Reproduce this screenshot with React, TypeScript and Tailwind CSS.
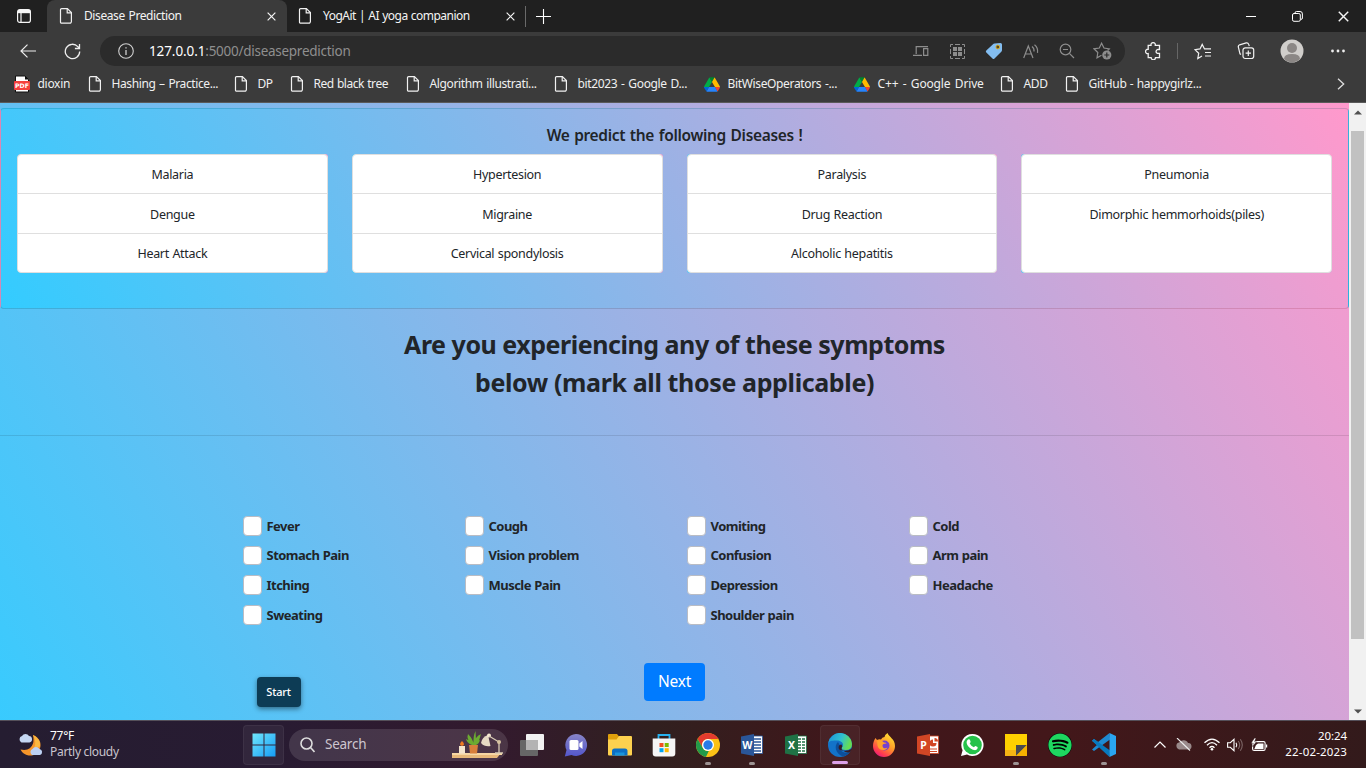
import React from "react";
import { FaSpotify } from "react-icons/fa";

const PageIcon = ({ className = "" }: { className?: string }) => (
  <svg className={`shrink-0 ${className}`} width="14" height="18" viewBox="0 0 14 18" fill="none" stroke="#f1f1f1" strokeWidth="1.2">
    <path d="M2.6 1.6h5.8l4 4v9a1.6 1.6 0 0 1-1.6 1.6H2.6A1.1 1.1 0 0 1 1.5 15V2.7a1.1 1.1 0 0 1 1.1-1.1z" />
    <path d="M8.2 1.8v4.1h4.1" />
  </svg>
);

const PdfIcon = () => (
  <svg className="shrink-0" width="16" height="18" viewBox="0 0 16 18">
    <path d="M1.5 1h9.500l3.500 3.500V17h-13z" fill="#fff" stroke="#111" />
    <path d="M11 1v3.500h3.500z" fill="#111" />
    <rect y="6" width="16" height="9" rx="1" fill="#f5403c" />
    <text x="8" y="12.900" textAnchor="middle" fontSize="6.200" fontWeight="700" fill="#fff" fontFamily="DejaVu Sans, sans-serif">PDF</text>
  </svg>
);

const DriveIcon = () => (
  <svg className="shrink-0" width="16" height="15" viewBox="0 0 87.300 78">
    <path d="M6.600 66.850l3.850 6.650c.8 1.400 1.950 2.500 3.300 3.300L27.500 53H0c0 1.550.4 3.100 1.200 4.500z" fill="#0066da" />
    <path d="M43.650 25L29.900 1.200c-1.350.8-2.500 1.900-3.300 3.300L1.200 48.500A9 9 0 0 0 0 53h27.500z" fill="#00ac47" />
    <path d="M73.550 76.800c1.350-.8 2.500-1.900 3.300-3.300l9.250-16c.8-1.400 1.200-2.950 1.200-4.500H59.800l5.850 11.500z" fill="#ea4335" />
    <path d="M43.650 25L57.400 1.200C56.050.4 54.500 0 52.900 0H34.400c-1.600 0-3.150.45-4.500 1.200z" fill="#00832d" />
    <path d="M59.800 53H27.500L13.750 76.800c1.350.8 2.900 1.200 4.500 1.200h50.800c1.600 0 3.150-.45 4.500-1.200z" fill="#2684fc" />
    <path d="M73.400 26.500l-12.700-22c-.8-1.400-1.950-2.500-3.300-3.300L43.650 25 59.800 53h27.450c0-1.550-.4-3.100-1.200-4.500z" fill="#ffba00" />
  </svg>
);

const Cross = ({ size = 9 }: { size?: number }) => (
  <svg className="shrink-0" width={size} height={size} viewBox="0 0 10 10" stroke="#f5f5f5" strokeWidth="1.300">
    <path d="M.7.7l8.600 8.600M9.300.7L.7 9.300" />
  </svg>
);

function TabStrip() {
  return (
    <div className="flex h-8 shrink-0 bg-[#202020] text-[12px] text-[#f4f4f4]">
      <div className="flex w-[47px] items-center justify-center">
        <svg width="16" height="16" viewBox="0 0 16 16" fill="none" stroke="#f5f5f5" strokeWidth="1.200">
          <rect x="1.600" y="1.600" width="12.800" height="12.800" rx="2.200" />
          <path d="M5 5v9" />
          <path d="M2 3.600h12" strokeWidth="3.200" />
        </svg>
      </div>
      <div className="flex w-60 items-center rounded-t-lg bg-[#3b3b3b] pl-3 pr-[11px]">
        <PageIcon />
        <span className="ml-[11px] flex-1 whitespace-nowrap tracking-[-0.4px] [word-spacing:1px]">Disease Prediction</span>
        <Cross />
      </div>
      <div className="flex w-[239px] items-center border-r border-[#6a6a6a] [border-image:linear-gradient(#202020_20%,#6a6a6a_20%,#6a6a6a_82%,#202020_82%)_1] pl-[11px] pr-[10px]">
        <PageIcon />
        <span className="ml-[11px] flex-1 whitespace-nowrap tracking-[-0.5px] [word-spacing:0.5px]">YogAit | AI yoga companion</span>
        <Cross />
      </div>
      <div className="flex w-[34px] items-center justify-center">
        <svg width="15" height="15" viewBox="0 0 15 15" stroke="#fff" strokeWidth="1.100"><path d="M7.500 0v15M0 7.500h15" /></svg>
      </div>
      <div className="ml-auto flex w-[138px]">
        <div className="flex w-[46px] items-center justify-center"><div className="h-px w-[10px] bg-white" /></div>
        <div className="flex w-[46px] items-center justify-center">
          <svg width="11" height="11" viewBox="0 0 11 11" fill="none" stroke="#fff"><rect x=".5" y="2.500" width="7.800" height="7.800" rx="1.500" /><path d="M3 2.300V2A1.500 1.500 0 0 1 4.500.5H8A2.400 2.400 0 0 1 10.400 3v4A1.400 1.400 0 0 1 9 8.400h-.5" /></svg>
        </div>
        <div className="flex w-[46px] items-center justify-center"><Cross size={11} /></div>
      </div>
    </div>
  );
}

function AddressBar() {
  return (
    <div className="flex h-[38px] shrink-0 items-center">
      <svg className="ml-5" width="16" height="14" viewBox="0 0 16 14" fill="none" stroke="#eee" strokeWidth="1.200"><path d="M16 7H1M7.500.6L1 7l6.500 6.400" /></svg>
      <svg className="ml-7" width="17" height="17" viewBox="0 0 17 17" fill="none" stroke="#eee" strokeWidth="1.300"><path d="M15.700 8.500a7.200 7.200 0 1 1-1.900-4.900l1.600 1.700M15.500 1v4.500h-4.600" /></svg>
      <div className="ml-[19px] flex h-[30px] w-[1025px] items-center rounded-full bg-[#2b2b2b] pl-[18px] pr-[13px]">
        <svg width="16" height="16" viewBox="0 0 16 16" fill="none" stroke="#d0d0d0" strokeWidth="1.100"><circle cx="8" cy="8" r="7.300" /><path d="M8 7v5M8 4.200v1.400" strokeWidth="1.300" /></svg>
        <div className="ml-[15px] flex-1 whitespace-nowrap text-[13.500px] tracking-[-0.1px] text-[#8f8f8f]"><span className="text-white">127.0.0.1</span><span className="tracking-[-0.270px]">:5000/diseaseprediction</span></div>
        <div className="flex items-center text-[#8d8d8d]">
          <svg width="16" height="12" viewBox="0 0 16 12" fill="none" stroke="currentColor" strokeWidth="1.200"><path d="M15 1.600H3.200v7.500M0 10.400h9M10.600 3.600h4.200v6.800h-4.200z" /></svg>
          <svg className="ml-[21px]" width="15" height="15" viewBox="0 0 15 15" fill="none" stroke="currentColor"><path d="M.5 3V.5H3M5 .5h5M12 .5h2.500V3M14.500 5v5M14.500 12v2.500H12M10 14.500H5M3 14.500H.5V12M.5 10V5" /><path fill="currentColor" stroke="none" d="M3 3h4v4H3zM8 3h4v4H8zM3 8h4v4H3zM8 8h4v4H8z" /></svg>
          <svg className="ml-5" width="18" height="18" viewBox="0 0 18 18"><path d="M8 2.200Q8.500 1.500 9.500 1.400L15.500 1q1.500 0 1.500 1.500V8q0 1-.7 1.700L9.500 16.500q-1 1-2 0L1.300 10.500q-1-1 0-2z" fill="#83bdf0" /><circle cx="12.800" cy="5" r="1.900" fill="#5a4a1b" stroke="#e1b22a" strokeWidth=".9" /></svg>
          <svg className="ml-5" width="16" height="15" viewBox="0 0 16 15" fill="none" stroke="currentColor" strokeWidth="1.200"><path d="M.7 14L5.300 2 10 14M2.300 10h6M9 2.500q2.500 2 2 5M11.500.8q3.800 3 3 8" /></svg>
          <svg className="ml-5" width="16" height="16" viewBox="0 0 16 16" fill="none" stroke="currentColor" strokeWidth="1.200"><circle cx="6.500" cy="6.500" r="5.300" /><path d="M10.400 10.400L15 15M4 6.500h5" /></svg>
          <svg className="ml-[18px]" width="19" height="18" viewBox="0 0 19 18" fill="none" stroke="currentColor" strokeWidth="1.200"><path d="M8.500 13.300L4 15.800l.8-5.300L1 6.800l5.300-.8L8.600 1.200 11 6l5.300.8-1.700 1.700" /><circle cx="13.800" cy="13" r="4.600" fill="currentColor" stroke="none" /><path d="M13.800 10.500v5M11.300 13h5" stroke="#2b2b2b" strokeWidth="1.200" /></svg>
        </div>
      </div>
      <svg className="ml-[20px]" width="17" height="18" viewBox="0 0 17 18" fill="none" stroke="#f1f1f1" strokeWidth="1.300"><path d="M3.200 3.300H6a2.200 2.200 0 1 1 4.300 0h4.200v4.200h-1a2 2 0 1 0 0 3.900h1v4.200h-4a2.200 2.200 0 1 1-4.400 0H3.200v-4a2.200 2.200 0 1 1 0-4.300z" /></svg>
      <div className="ml-[15px] h-4 w-px bg-[#666]" />
      <svg className="ml-4" width="18" height="17" viewBox="0 0 18 17" fill="none" stroke="#f1f1f1" strokeWidth="1.200"><path d="M8 13l-4.200 2.500.9-5.200L1 6.700l5-.8 2.200-4.500 2.300 4.500H17M11 9.500h6M11 13h6" /></svg>
      <svg className="ml-[25px]" width="18" height="18" viewBox="0 0 18 18" fill="none" stroke="#f1f1f1" strokeWidth="1.200"><rect x="6" y="5.800" width="10.700" height="10.700" rx="2.200" /><path d="M11.300 8.500v5.400M8.600 11.200H14M4 12.500l-1-.7L1.300 5a2 2 0 0 1 1.300-2.200l6.600-1.900a2 2 0 0 1 2.400 1.200l.7 2" /></svg>
      <svg className="ml-[25px]" width="24" height="24" viewBox="0 0 24 24"><circle cx="12" cy="12" r="11.500" fill="#d0cecb" /><circle cx="12" cy="9" r="5" fill="#8b8785" /><path d="M4 20q0-5 8-5t8 5a11.500 11.500 0 0 1-16 0z" fill="#8b8785" /></svg>
      <svg className="ml-[26px]" width="16" height="4" viewBox="0 0 16 4" fill="#eee"><circle cx="2.500" cy="2" r="1.400" /><circle cx="8" cy="2" r="1.400" /><circle cx="13.500" cy="2" r="1.400" /></svg>
    </div>
  );
}

const bookmarks = [
  { label: "dioxin", box: "w-[74px]", text: "tracking-[-0.3px]", icon: <PdfIcon /> },
  { label: "Hashing – Practice...", box: "w-[146px]", text: "tracking-[-0.4px] [word-spacing:1px]", icon: <PageIcon /> },
  { label: "DP", box: "w-14", text: "tracking-[-0.5px]", icon: <PageIcon /> },
  { label: "Red black tree", box: "w-[116px]", text: "tracking-[-0.45px] [word-spacing:0.5px]", icon: <PageIcon /> },
  { label: "Algorithm illustrati...", box: "w-[148px]", text: "tracking-[-0.38px] [word-spacing:1px]", icon: <PageIcon /> },
  { label: "bit2023 - Google D...", box: "w-[150px]", text: "tracking-[-0.35px] [word-spacing:1px]", icon: <PageIcon /> },
  { label: "BitWiseOperators -...", box: "w-[150px]", text: "tracking-[-0.35px] [word-spacing:1px]", icon: <DriveIcon /> },
  { label: "C++ - Google Drive", box: "w-[146px]", text: "tracking-[-0.15px] [word-spacing:1.4px]", icon: <DriveIcon /> },
  { label: "ADD", box: "w-[65px]", text: "tracking-[-0.3px]", icon: <PageIcon /> },
  { label: "GitHub - happygirlz...", box: "w-[150px]", text: "tracking-[-0.3px] [word-spacing:0.5px]", icon: <PageIcon /> },
];

function Bookmarks() {
  return (
    <div className="flex h-[28px] items-center pl-[14px] text-[12px] text-[#f0f0f0]">
      {bookmarks.map((b) => (
        <div key={b.label} className={`flex shrink-0 items-center ${b.box}`}>
          <div className="flex w-[23.500px] shrink-0">{b.icon}</div>
          <span className={`whitespace-nowrap ${b.text}`}>{b.label}</span>
        </div>
      ))}
      <svg className="ml-auto mr-[21px]" width="8" height="12" viewBox="0 0 8 12" fill="none" stroke="#ddd" strokeWidth="1.300"><path d="M1 .7L6.700 6 1 11.300" /></svg>
    </div>
  );
}

const diseases = [
  ["Malaria", "Dengue", "Heart Attack"],
  ["Hypertesion", "Migraine", "Cervical spondylosis"],
  ["Paralysis", "Drug Reaction", "Alcoholic hepatitis"],
  ["Pneumonia", "Dimorphic hemmorhoids(piles)", ""],
];

const symptoms = [
  ["Fever", "Stomach Pain", "Itching", "Sweating"],
  ["Cough", "Vision problem", "Muscle Pain"],
  ["Vomiting", "Confusion", "Depression", "Shoulder pain"],
  ["Cold", "Arm pain", "Headache"],
];

function Diseases() {
  return (
    <section className="mt-[5px] h-[201px] shrink-0 rounded-[4px] border border-black/[0.125] bg-[linear-gradient(60deg,#33ccff,#ff99cc)] px-4 text-[#212529]">
      <h5 className="flex h-[45px] items-end justify-center pb-[7px] text-[15.5px] font-semibold tracking-[-0.34px] [word-spacing:1px]">We predict the following Diseases !</h5>
      <div className="grid grid-cols-4 gap-6">
        {diseases.map((list, i) => (
          <div key={i} className="h-[119px] rounded-[3px] bg-[linear-gradient(60deg,#33ccff,#ff99cc)]">
            <ul className="flex h-full flex-col rounded-[4px] border border-[#dfdfdf] bg-white text-center text-[12.5px] tracking-[-0.3px] [word-spacing:0.5px]">
              {list.map((d, j) => (
                <li key={j} className={`flex flex-1 items-center justify-center pt-[3px] ${j < 2 ? (i === 3 && j === 1 ? "border-b border-white" : "border-b border-[#dfdfdf]") : ""}`}>{d}</li>
              ))}
            </ul>
          </div>
        ))}
      </div>
    </section>
  );
}

function Page() {
  return (
    <div className="flex h-[617px] shrink-0">
      <main className="flex w-[1349px] flex-col overflow-hidden bg-[linear-gradient(60deg,#33ccff,#ff99cc)] bg-[length:1349px_712px] bg-[position:0_-14px] text-[#212529]">
        <Diseases />
        <h1 className="flex h-[127px] shrink-0 flex-col items-center border-b border-black/10 pt-[16px] text-[25px] font-bold leading-[38px]">
          <span className="tracking-[-0.47px]">Are you experiencing any of these symptoms</span>
          <span className="tracking-[-0.37px]">below (mark all those applicable)</span>
        </h1>
        <div className="mt-[75px] flex pl-[243px]">
          {symptoms.map((col, i) => (
            <div key={i} className="flex w-[222px] flex-col">
              {col.map((s) => (
                <label key={s} className="flex h-[29.700px] items-center">
                  <span className="h-[19.500px] w-[19px] rounded-[4px] border border-[#b9bcc4] bg-white" />
                  <span className="ml-[4.500px] pt-px text-[13px] font-bold tracking-[-0.52px] [word-spacing:0.5px]">{s}</span>
                </label>
              ))}
            </div>
          ))}
        </div>
        <div className="mt-[33px] flex items-start pl-[257px]">
          <button className="mt-[14px] h-[30px] w-11 rounded-[4px] bg-[#0d3c55] pr-px text-[11px] font-medium tracking-[-0.2px] text-white shadow-[0_2px_5px_rgba(0,0,0,0.45)]">Start</button>
          <button className="ml-[343px] h-[38px] w-[61px] rounded-[4px] bg-[#007bff] text-[15.500px] tracking-[-0.2px] text-white">Next</button>
        </div>
      </main>
      <div className="flex w-[17px] flex-col items-center bg-[#f1f1f1]">
        <svg className="mt-[6px] mb-[14px] shrink-0" width="8" height="8" viewBox="0 0 8 8" fill="#505050"><path d="M0 5.500L4 1.500l4 4z" /></svg>
        <div className="h-[508px] w-[13px] bg-[#c1c1c1]" />
        <svg className="mt-auto mb-[5px] shrink-0" width="8" height="8" viewBox="0 0 8 8" fill="#505050"><path d="M0 2.500L4 6.500l4-4z" /></svg>
      </div>
    </div>
  );
}

const WeatherIcon = () => (
  <svg width="25" height="24" viewBox="0 0 25 24">
    <path d="M15 2a10.500 10.500 0 1 1-12.500 14.500q10 2 12.500-6 1-4 0-8.500z" fill="#f5952a" />
    <path d="M15 2q8 4 7 11.500l-6 2q3-6-1-13.500z" fill="#fbb83f" />
    <path d="M3.500 9.500a3.500 3.500 0 0 1 .5-6.500 4 4 0 0 1 7 0 3.300 3.300 0 0 1 .5 6.500z" fill="#c5d7f3" />
    <path d="M14 22a3.400 3.400 0 0 1 .5-6 4 4 0 0 1 7 0 3.100 3.100 0 0 1 .5 6z" fill="#bdd1f3" />
  </svg>
);

const LampArt = () => (
  <svg width="52" height="28" viewBox="0 0 52 28">
    <path d="M0 22h49l-4 5H0z" fill="#e7b97a" /><path d="M0 22h50v2H0z" fill="#f6d7a4" />
    <rect x="7" y="15" width="6" height="7.500" fill="#f4e5cd" /><path d="M10 10q4 4 0 5-4-1 0-5z" fill="#f07b22" />
    <path d="M17 14h9l-1 8.500h-7z" fill="#d77f3b" />
    <path d="M21.500 14Q21 5 23.500 0q1 7-.5 14zM20 14Q14 8 16 3q5 5 6 11zM22 14q1-9 7-11-1 6-5 11zM20 14q-5-2-6-6 6 2 7 6zM23 14q1-4 5-5-1 4-4 5z" fill="#6cab31" />
    <path d="M29 12q1-6 7-8l2.500 11q-6 1-9.500-3z" fill="#e6dac4" /><circle cx="37" cy="4.500" r="2" fill="#f6ead2" />
    <path d="M37 5l10 6v11M43 22h8" fill="none" stroke="#d9cbb4" strokeWidth="1.300" /><circle cx="47" cy="11" r="2" fill="#d7c3a1" />
  </svg>
);

const OfficeIcon = ({ letter, color, children }: { letter: string; color: string; children: React.ReactNode }) => (
  <svg width="24" height="24" viewBox="0 0 24 24">
    <path d="M12 3h10.500v17.500H12z" fill="#fff" stroke={color} strokeWidth=".8" />
    {children}
    <path d="M1 3.500L14 1v22L1 20.500z" fill={color} />
    <text x="7.400" y="15.800" textAnchor="middle" fontSize="10.500" fontWeight="700" fill="#fff" fontFamily="Noto Sans, sans-serif">{letter}</text>
  </svg>
);

const apps: { name: string; dot?: boolean; active?: boolean; icon: React.ReactNode }[] = [
  { name: "tasks", icon: <svg width="24" height="24" viewBox="0 0 24 24"><rect x="6" y="1" width="18" height="16" rx="1" fill="#f2f2f2" /><rect x="0" y="7" width="18" height="16" rx="1" fill="#666" /><path d="M6 7h12v10H6z" fill="#b3b3b3" /></svg> },
  { name: "chat", icon: <svg width="24" height="24" viewBox="0 0 24 24"><defs><linearGradient id="chat" x2="0" y2="1"><stop stopColor="#8784c6" /><stop offset="1" stopColor="#5356cb" /></linearGradient></defs><path d="M12 1a11 11 0 1 1-4.500 21L.8 23.500 2.500 17A11 11 0 0 1 12 1z" fill="url(#chat)" /><rect x="5.500" y="7" width="9" height="10" rx="1.500" fill="#fff" /><path d="M15.300 10.500L18.500 8v8l-3.200-2.500z" fill="#fff" /></svg> },
  { name: "files", icon: <svg width="24" height="24" viewBox="0 0 24 24"><path d="M0 2q0-1 1-1h8l2.500 3H23v5H0z" fill="#e0a00c" /><path d="M0 6.500h8.500L11 3h12q1 0 1 1v17.500q0 1-1 1H1q-1 0-1-1z" fill="#fdd14f" /><path d="M4 22.500V18q0-2.500 2.500-2.500h10.500q2.500 0 2.500 2.500v4.500z" fill="#0c6fc4" /><path d="M7 19.500h9.500v3H7z" fill="#1995dc" /></svg> },
  { name: "store", icon: <svg width="24" height="24" viewBox="0 0 24 24"><path d="M6.500 6.500V2h11v4.500" fill="none" stroke="#28b2ef" strokeWidth="1.800" /><path d="M.7 5.500h22.600v15q0 3-3 3H3.700q-3 0-3-3z" fill="#f5f5f5" /><path d="M7.500 10h4v4h-4z" fill="#f25022" /><path d="M12.700 10h4v4h-4z" fill="#7fba00" /><path d="M7.500 15.200h4v4h-4z" fill="#00a4ef" /><path d="M12.700 15.200h4v4h-4z" fill="#ffb900" /></svg> },
  { name: "chrome", dot: true, icon: <svg width="24" height="24" viewBox="0 0 24 24"><circle cx="12" cy="12" r="12" fill="#fbc116" /><path d="M12 0a12 12 0 0 1 10.400 6H12a6 6 0 0 0-5.200 9L1.600 6A12 12 0 0 1 12 0z" fill="#e33b2e" /><path d="M1.600 6l5.200 9a6 6 0 0 0 6.200 3l-2.600 5.900A12 12 0 0 1 1.600 6z" fill="#229a4a" /><path d="M17.200 15L12 24a12 12 0 0 1-2-.2L13.500 17z" fill="#fbc116" /><circle cx="12" cy="12" r="6" fill="#fff" /><circle cx="12" cy="12" r="4.700" fill="#287be8" /></svg> },
  { name: "word", dot: true, icon: <OfficeIcon letter="W" color="#2a5699"><path d="M14 6h7M14 9h7M14 12h7M14 15h7M14 18h7" stroke="#2a5699" strokeWidth="1.300" /></OfficeIcon> },
  { name: "excel", icon: <OfficeIcon letter="X" color="#1f7245"><path d="M14 6h7M14 9h7M14 12h7M14 15h7M14 18h7" stroke="#1f7245" strokeWidth="1.600" /><path d="M17.500 4v16" stroke="#fff" strokeWidth="1" /></OfficeIcon> },
  { name: "edge", dot: true, active: true, icon: <svg width="24" height="24" viewBox="0 0 24 24"><defs><linearGradient id="e1" x2="1" y2=".3"><stop stopColor="#1a91d6" /><stop offset=".6" stopColor="#30c0cf" /><stop offset="1" stopColor="#65dc55" /></linearGradient></defs><circle cx="12" cy="12" r="12" fill="#1373c9" /><path d="M.2 10A12 12 0 0 1 24 11q0 6-6.500 6c-3 0-4.500-1-3.500-2.500 3-4-1-7-5-7-4 0-7 0-8.800 2.500z" fill="url(#e1)" /><path d="M10 9c-4 3-3 12 5 14.500q5-1 7.500-5c-4 2.500-9 1-10.500-2-1.500-3 0-4 0-4z" fill="#0c4f9c" /><path d="M13.500 11.500q1.700 1.500.1 3.500-.5 1.800 1.500 2.500-4.500.3-4.500-3.200.3-2.800 2.900-2.800zM15 17.500q4.500 1 9-2-1 3-2.500 3.800-3.500 1-6.500-1.800z" fill="#351c25" /></svg> },
  { name: "firefox", icon: <svg width="24" height="24" viewBox="0 0 24 24"><defs><linearGradient id="ff" x1=".8" x2=".2" y2="1"><stop stopColor="#ffe634" /><stop offset=".45" stopColor="#ff9a29" /><stop offset=".8" stopColor="#ff3b50" /><stop offset="1" stopColor="#e31587" /></linearGradient></defs><path d="M15.500 0c1.500 4 7.500 6 7.500 13A11 11 0 0 1 1 13c0-3 1-6 2.500-8L5 7q2-1 4-.5Q10 4 12.500 4q0-2 3-4z" fill="url(#ff)" /><circle cx="12.500" cy="12.500" r="5" fill="#7541cf" /><path d="M5 7.500l4-.5 3 2.500q2.500 0 2.500 1-4 0-4 2c0 3 3 3.500 5 2-2 4-9 3.500-10-2z" fill="#ffa12b" /></svg> },
  { name: "powerpoint", icon: <OfficeIcon letter="P" color="#d24625"><path d="M14 16h7M14 18.500h7" stroke="#d24625" /><path d="M17 6.500a3.500 3.500 0 1 0 3.500 3.500H17zM18.500 5v3.500H22A3.500 3.500 0 0 0 18.500 5z" fill="#d24625" /></OfficeIcon> },
  { name: "whatsapp", icon: <svg width="24" height="24" viewBox="0 0 24 24"><path d="M12.500 1a11 11 0 1 1-5.500 20.500L1 23l1.600-5.800A11 11 0 0 1 12.500 1z" fill="#fff" /><circle cx="12.500" cy="12" r="9.300" fill="#25c24a" /><path d="M9 6.300c.8 0 1 .7 1.600 2.400.1.700-.7 1.200-.9 1.600 1 2 2.300 3.100 4.200 3.900.6-.4 1-1.400 1.500-1.200 1.700.8 2.400 1 2.300 1.600-.2 2-1.800 2.700-3.400 2.500-3.700-.7-7.400-4.200-7.700-7.600 0-1.700 1.100-3.100 2.400-3.200z" fill="#fff" /></svg> },
  { name: "notes", dot: true, icon: <svg width="24" height="24" viewBox="0 0 24 24"><path d="M1 1h22v12l-10 10H1z" fill="#ffd100" /><path d="M1 17h12v6H1z" fill="#f5b414" /><path d="M12 12h11L12 23z" fill="#494a4f" /><path d="M23 12v11H12z" fill="#f5b000" /></svg> },
  { name: "spotify", icon: <span className="flex rounded-full bg-black"><FaSpotify size={24} color="#1ed760" /></span> },
  { name: "vscode", dot: true, icon: <svg width="24" height="24" viewBox="0 0 24 24"><path d="M0 7.700l2-1.600 4 3L17.500 0 18 6.500 2 17.900 0 16.400l5-4.400z" fill="#1e8ad2" /><path d="M2 6.100L18 17.400 17.500 24 0 7.700z" fill="#0879be" /><path d="M17.500 0L24 3v18l-6.500 3z" fill="#2aa6f2" /></svg> },
];

function Taskbar() {
  return (
    <footer className="flex h-12 shrink-0 items-center border-t border-[#55505a] bg-[linear-gradient(90deg,#251d31_0%,#281b32_20%,#331a2e_36%,#31201f_48%,#3f171b_61%,#43171a_77%,#331a1b_100%)] text-[12px] text-white">
      <div className="ml-[18px] flex w-[225px] items-center gap-[7px]">
        <WeatherIcon />
        <div className="flex flex-col pb-px leading-4">
          <span className="tracking-[-0.3px]">77°F</span>
          <span className="whitespace-nowrap tracking-[-0.3px] text-[#c9c4ce]">Partly cloudy</span>
        </div>
      </div>
      <div className="flex h-10 w-[41px] shrink-0 items-center justify-center rounded border border-white/5 bg-white/[0.05]">
        <svg width="24" height="24" viewBox="0 0 24 24"><defs><linearGradient id="win" x2="1" y2="1"><stop stopColor="#70e7fc" /><stop offset="1" stopColor="#159cf5" /></linearGradient></defs><path d="M.5.5h11v11H.5zM12.500.5h11v11h-11zM.5 12.500h11v11H.5zM12.500 12.500h11v11h-11z" fill="url(#win)" /></svg>
      </div>
      <div className="ml-[5px] flex h-8 w-[219px] shrink-0 items-center rounded-full bg-white/[0.12] pl-[11px] pr-1">
        <svg width="15" height="16" viewBox="0 0 15 16" fill="none" stroke="#ddd" strokeWidth="1.600"><circle cx="6.500" cy="6.500" r="5.500" /><path d="M10.500 10.500l4 4.500" /></svg>
        <span className="ml-[10px] flex-1 text-[13.500px] tracking-[-0.25px] text-[#cdc6cf]">Search</span>
        <LampArt />
      </div>
      <div className="ml-[2px] flex shrink-0">
        {apps.map((a) => (
          <div key={a.name} className="flex h-10 w-11 justify-center">
            <div className={`relative flex h-10 w-10 items-center justify-center rounded ${a.active ? "border border-white/5 bg-white/[0.05]" : ""}`}>
              {a.icon}
              {a.dot && <span className={`absolute bottom-0 h-[3px] rounded-full ${a.active ? "w-4 bg-[#dca0e8]" : "w-[6px] bg-[#9d9393]"}`} />}
            </div>
          </div>
        ))}
      </div>
      <svg className="ml-[28px] shrink-0" width="12" height="7" viewBox="0 0 12 7" fill="none" stroke="#fff" strokeWidth="1.200"><path d="M.5 6.500L6 1l5.500 5.500" /></svg>
      <svg className="ml-[9px] shrink-0" width="17" height="13" viewBox="0 0 17 13"><path d="M4 11.500a3.700 3.700 0 0 1 .5-7.200A5 5 0 0 1 13 5a3.200 3.200 0 0 1 .5 6.500z" fill="#99898a" /><path d="M2 0l13 12.500" stroke="#eee" strokeWidth="1.100" /></svg>
      <svg className="ml-[12px] shrink-0" width="16" height="13" viewBox="0 0 16 13" fill="none" stroke="#fff" strokeWidth="1.300"><path d="M.5 4.800q7.500-7.500 15 0M3 7.200q5-5 10 0M5.500 9.700q2.500-2.500 5 0" /><circle cx="8" cy="11.300" r="1.300" fill="#fff" stroke="none" /></svg>
      <svg className="ml-[7px] shrink-0" width="16" height="14" viewBox="0 0 16 14" fill="none" stroke="#fff" strokeWidth="1.100"><path d="M.6 4.700h2.700L7 1.300v11.400L3.300 9.300H.6z" /><path d="M9 4.800q1.600 2.200 0 4.400" /><path d="M11.200 3q3 4 0 8M13.300 1.300q4 5.700 0 11.400" stroke="#7c6566" /></svg>
      <svg className="ml-[8px] shrink-0" width="17" height="14" viewBox="0 0 17 14"><rect x="1.600" y="3.600" width="12.500" height="8.800" rx="1.500" fill="none" stroke="#fff" strokeWidth="1.100" /><path d="M5 7l2-1.500h5.500V11H3.300z" fill="#fff" /><path d="M15 6.500h1.200v3H15z" fill="#fff" /><path d="M3.500 0L0 5.200h2.200L1.500 8.500 5.500 3.800H3.600L5 0z" fill="#fff" stroke="#371b1d" strokeWidth=".5" /></svg>
      <div className="ml-auto mr-[19px] flex flex-col items-end whitespace-nowrap pb-px text-[11.500px] leading-4">
        <span className="tracking-[-0.1px]">20:24</span>
        <span className="tracking-[0.160px]">22-02-2023</span>
      </div>
    </footer>
  );
}

export default function App() {
  return (
    <div className="flex h-screen w-[1366px] flex-col overflow-hidden font-['Noto_Sans','Open_Sans',sans-serif]">
      <TabStrip />
      <div className="flex h-[71px] shrink-0 flex-col border-b border-[#5a5a5a] bg-[#3b3b3b]">
        <AddressBar />
        <Bookmarks />
      </div>
      <Page />
      <Taskbar />
    </div>
  );
}
